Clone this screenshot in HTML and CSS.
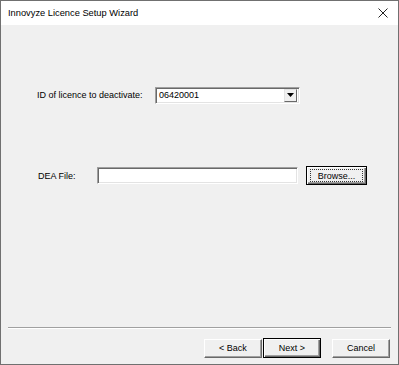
FILE: index.html
```html
<!DOCTYPE html>
<html>
<head>
<meta charset="utf-8">
<link rel="stylesheet" href="styles.css">
</head>
<body>
<div class="window">
  <div class="titlebar">
    <span class="title">Innovyze Licence Setup Wizard</span>
    <svg class="close" width="10" height="10" viewBox="0 0 10 10"><path d="M0.5 0.5 L9.5 9.5 M9.5 0.5 L0.5 9.5" stroke="#222" stroke-width="1" fill="none"/></svg>
  </div>
  <div class="content">
    <div class="row row-id">
      <label class="label label-id">ID of licence to deactivate:</label>
      <div class="combo">
        <span class="combo-text">06420001</span>
        <span class="combo-btn"><svg width="7" height="4" viewBox="0 0 7 4"><path d="M0 0 H7 L3.5 4 Z" fill="#000"/></svg></span>
      </div>
    </div>
    <div class="row row-dea">
      <label class="label label-dea">DEA File:</label>
      <div class="textbox"></div>
      <button class="btn btn-browse"><span class="focus">Browse...</span></button>
    </div>
    <div class="footer">
      <div class="separator"></div>
      <div class="buttons">
        <button class="btn btn-back">&lt; Back</button>
        <button class="btn btn-next">Next &gt;</button>
        <button class="btn btn-cancel">Cancel</button>
      </div>
    </div>
  </div>
</div>
</body>
</html>
```
FILE: styles.css
```css
* { box-sizing: border-box; }
html, body { margin: 0; padding: 0; }
body {
  width: 399px;
  height: 365px;
  font-family: "Liberation Sans", Arial, sans-serif;
  font-size: 9px;
  color: #000;
  background: #f0f0f0;
}
.window {
  width: 399px;
  height: 365px;
  border: 1px solid #707070;
  display: flex;
  flex-direction: column;
  background: #f0f0f0;
}
.titlebar {
  height: 24px;
  background: #fff;
  display: flex;
  align-items: center;
  padding-left: 7px;
  padding-right: 10px;
  flex: none;
}
.title {
  font-size: 9.3px;
  color: #000;
  flex: 1;
}
.close { display: block; }
.content {
  flex: 1;
  display: flex;
  flex-direction: column;
  padding-top: 61px;
}
.row {
  display: flex;
  align-items: center;
}
.row-id { height: 18px; }
.label-id { margin-left: 36px; width: 118px; }
.combo {
  width: 145px;
  height: 17px;
  background: #fff;
  border-top: 1px solid #a0a0a0;
  border-left: 1px solid #a0a0a0;
  border-right: 1px solid #fff;
  border-bottom: 1px solid #fff;
  box-shadow: inset 1px 1px 0 #696969, inset -1px -1px 0 #e3e3e3;
  display: flex;
  align-items: center;
  padding: 2px 2px 2px 3px;
}
.combo-text { flex: 1; }
.combo-btn {
  width: 13px;
  height: 13px;
  background: #f0f0f0;
  border-top: 1px solid #e3e3e3;
  border-left: 1px solid #e3e3e3;
  border-right: 1px solid #696969;
  border-bottom: 1px solid #696969;
  display: flex;
  align-items: center;
  justify-content: center;
}
.combo-btn svg { display: block; }
.row-dea {
  margin-top: 62px;
  height: 19px;
}
.label-dea { margin-left: 37px; width: 59px; }
.textbox {
  width: 201px;
  height: 17px;
  background: #fff;
  border-top: 1px solid #a0a0a0;
  border-left: 1px solid #a0a0a0;
  border-right: 1px solid #fff;
  border-bottom: 1px solid #fff;
  box-shadow: inset 1px 1px 0 #696969, inset -1px -1px 0 #e3e3e3;
}
.btn {
  font-family: "Liberation Sans", Arial, sans-serif;
  font-size: 9px;
  color: #000;
  background: #f0f0f0;
  height: 19px;
  width: 58px;
  padding: 0;
  margin: 0;
  border-top: 1px solid #fff;
  border-left: 1px solid #fff;
  border-right: 1px solid #696969;
  border-bottom: 1px solid #696969;
  box-shadow: inset -1px -1px 0 #a0a0a0;
  display: flex;
  align-items: center;
  justify-content: center;
}
.btn-browse {
  margin-left: 8px;
  width: 61px;
  border: 1px solid #000;
  box-shadow: inset 1px 1px 0 #fff, inset -1px -1px 0 #696969, inset -2px -2px 0 #a0a0a0;
}
.focus {
  border: 1px dotted #333;
  width: 53px;
  height: 13px;
  display: flex;
  align-items: center;
  justify-content: center;
}
.footer {
  margin-top: auto;
  padding-bottom: 6px;
}
.separator {
  margin: 0 7px 0 7px;
  height: 2px;
  border-top: 1px solid #a0a0a0;
  border-bottom: 1px solid #fff;
}
.buttons {
  display: flex;
  justify-content: flex-end;
  padding-right: 8px;
  margin-top: 9px;
  align-items: center;
}
.btn-back { margin-right: 1px; }
.btn-next {
  height: 20px;
  border: 1px solid #000;
  box-shadow: inset 1px 1px 0 #fff, inset -1px -1px 0 #696969, inset -2px -2px 0 #a0a0a0;
}
.btn-cancel { margin-left: 11px; }
```
